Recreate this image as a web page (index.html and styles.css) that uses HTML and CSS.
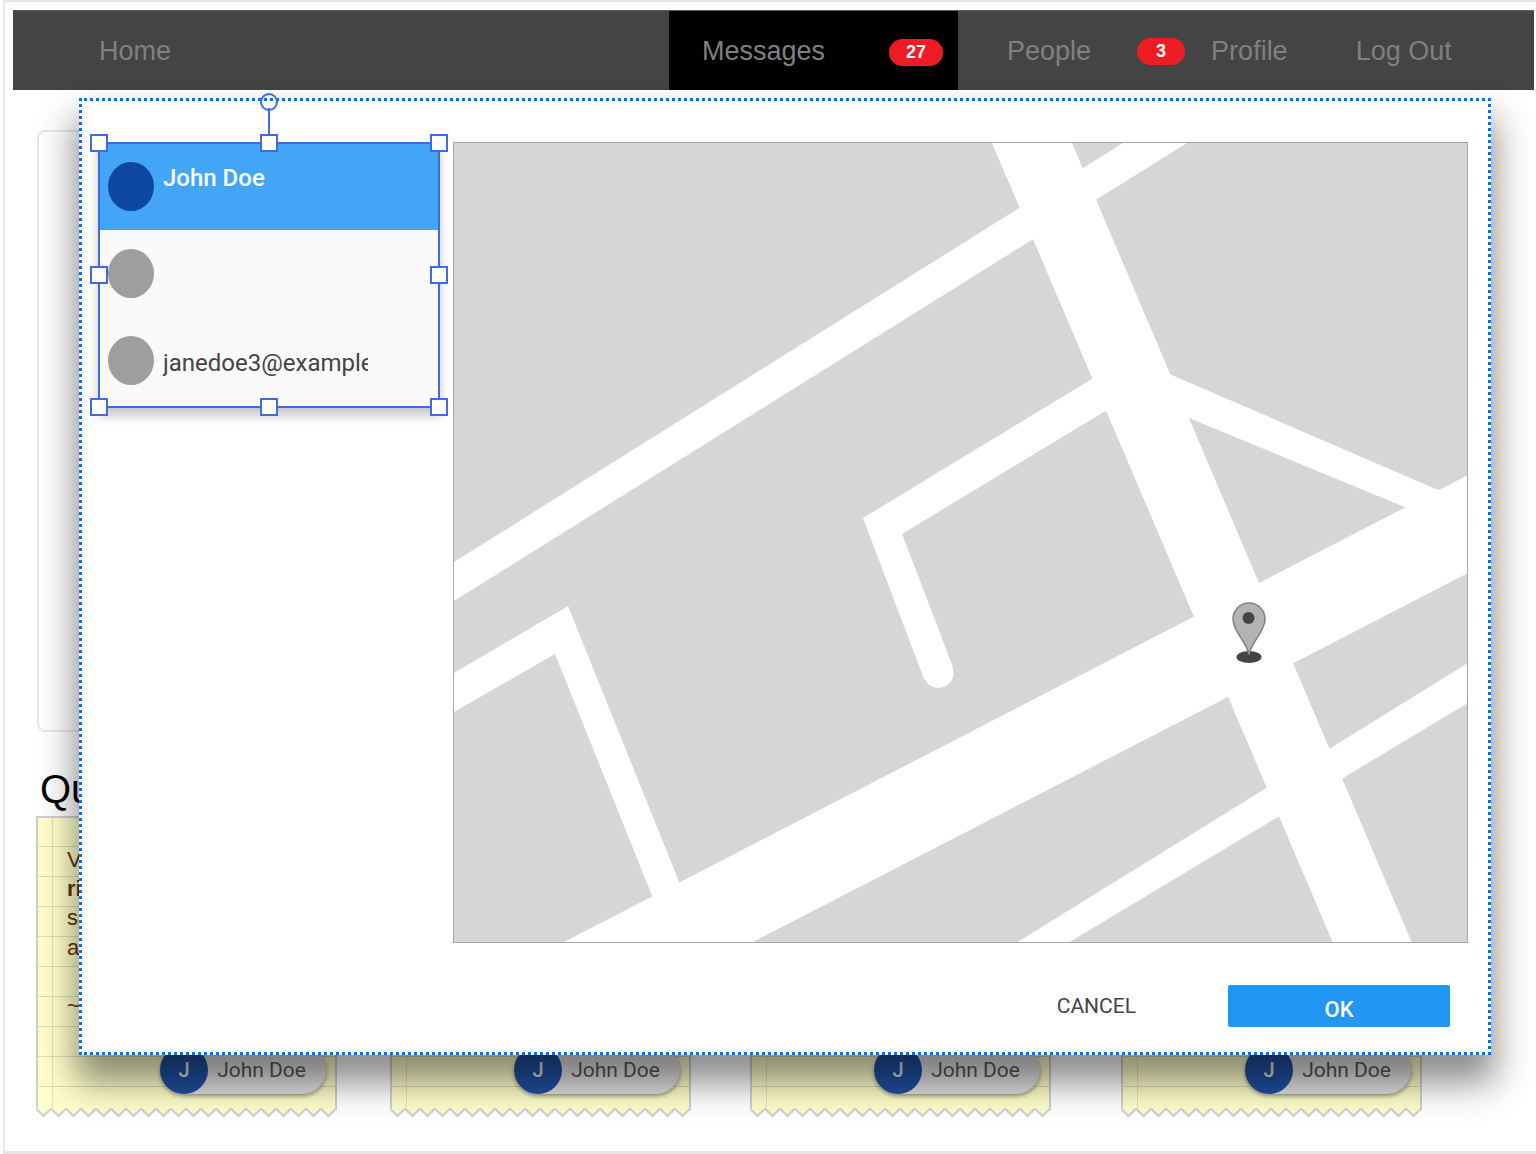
FILE: index.html
```html
<!DOCTYPE html>
<html lang="en">
<head>
    <meta charset="UTF-8">
    <meta name="viewport" content="width=device-width, initial-scale=1.0">
    <title>Messages</title>
    <link rel="stylesheet" href="styles.css">
</head>
<body>
    <svg class="defs" width="0" height="0">
        <defs>
            <pattern id="zigzag" width="15" height="10" patternUnits="userSpaceOnUse">
                <path d="M0 0V0.5L7.5 8L15 0.5V0Z" fill="#ffffcc"/>
                <path d="M0 0.5L7.5 8L15 0.5" fill="none" stroke="#cfcfcf" stroke-width="2"/>
            </pattern>
        </defs>
    </svg>

    <div class="page">
        <nav class="nav">
            <a class="nav-home">Home</a>
            <div class="nav-active">
                <a>Messages</a>
                <span class="badge badge-messages">27</span>
            </div>
            <a class="nav-people">People</a>
            <span class="badge badge-people">3</span>
            <a class="nav-profile">Profile</a>
            <a class="nav-logout">Log Out</a>
        </nav>

        <div class="card"></div>

        <h2 class="heading">Quotes</h2>

        <div class="notes">
            <div class="note-cell">
                <div class="note">
                    <p class="note-text">Very<br><strong>right</strong><br>so<br>and<br><br>~</p>
                    <div class="chip"><span class="chip-avatar">J</span><span>John Doe</span></div>
                    <svg class="note-edge"><rect width="100%" height="10" fill="url(#zigzag)"/></svg>
                </div>
            </div>
            <div class="note-cell">
                <div class="note">
                    <div class="chip"><span class="chip-avatar">J</span><span>John Doe</span></div>
                    <svg class="note-edge"><rect width="100%" height="10" fill="url(#zigzag)"/></svg>
                </div>
            </div>
            <div class="note-cell">
                <div class="note">
                    <div class="chip"><span class="chip-avatar">J</span><span>John Doe</span></div>
                    <svg class="note-edge"><rect width="100%" height="10" fill="url(#zigzag)"/></svg>
                </div>
            </div>
            <div class="note-cell">
                <div class="note">
                    <div class="chip"><span class="chip-avatar">J</span><span>John Doe</span></div>
                    <svg class="note-edge"><rect width="100%" height="10" fill="url(#zigzag)"/></svg>
                </div>
            </div>
        </div>
    </div>

    <div class="modal">
        <div class="modal-body">
            <div class="people">
                <div class="person person-selected">
                    <span class="avatar"></span>
                    <span class="person-name">John Doe</span>
                </div>
                <div class="person">
                    <span class="avatar"></span>
                </div>
                <div class="person">
                    <span class="avatar"></span>
                    <span class="person-name">janedoe3@example.com</span>
                </div>

                <span class="rotate-stem"></span>
                <span class="rotate-knob"></span>
                <span class="handle h-tl"></span>
                <span class="handle h-tc"></span>
                <span class="handle h-tr"></span>
                <span class="handle h-ml"></span>
                <span class="handle h-mr"></span>
                <span class="handle h-bl"></span>
                <span class="handle h-bc"></span>
                <span class="handle h-br"></span>
            </div>

            <svg class="map" viewBox="454 143 1013 799" width="1015" height="801">
                <rect x="454" y="143" width="1013" height="799" fill="#d6d6d6"/>
                <g fill="#ffffff">
                    <polygon points="992,143 1072,143 1412,943 1333,943"/>
                    <polygon points="454,562 1123,143 1187,143 454,601"/>
                    <polygon points="562,943 1468,475 1468,573 751,943"/>
                    <polygon points="454,673 568,606 680,884 653,898 555,654 454,712"/>
                    <polygon points="1110,368 863,518 924,679 953,667 902,534 1122,401"/>
                    <circle cx="938.5" cy="673" r="15"/>
                    <polygon points="1160,370 1438,490 1445,495 1407,508 1189,418"/>
                    <polygon points="1016,943 1468,663 1468,703 1068,943"/>
                </g>
                <ellipse cx="1249" cy="657" rx="12.5" ry="6" fill="#444444"/>
                <path d="M1249 655C1247 642 1233 632 1233 619A16 16 0 0 1 1265 619C1265 632 1251 642 1249 655Z" fill="#b3b3b3" stroke="#808080" stroke-width="1.5"/>
                <circle cx="1248.5" cy="618" r="6" fill="#444444"/>
            </svg>
        </div>

        <div class="modal-footer">
            <button type="button" class="btn-cancel">CANCEL</button>
            <button type="button" class="btn-ok">OK</button>
        </div>
    </div>
</body>
</html>
```

FILE: styles.css
```css
html, body {
    margin: 0;
    height: 1154px;
    overflow: hidden;
    background-color: #fff;
}
body {
    font-family: "Liberation Sans", Arial, sans-serif;
}
.defs {
    position: absolute;
}
.page {
    box-sizing: border-box;
    height: 1154px;
    margin-left: 3px;
    padding-top: 8px;
    border-left: 2px solid #e6e6e6;
    border-top: 2px solid #e6e6e6;
    border-bottom: 3px solid #e6e6e6;
}

/* top bar */
.nav {
    display: flex;
    align-items: center;
    box-sizing: border-box;
    height: 80px;
    margin: 0 2px 0 8px;
    padding-top: 2px;
    border-top: 1px solid #5e5e5e;
    background-color: #444444;
    font-size: 27px;
    color: #808080;
}
.nav-home {
    margin-left: 86px;
}
.nav-active {
    display: flex;
    align-items: center;
    align-self: flex-start;
    box-sizing: border-box;
    width: 289px;
    height: 79px;
    margin-top: -2px;
    margin-left: 498px;
    padding: 1px 0 0 33px;
    background-color: #000;
}
.nav-people {
    margin-left: 49px;
}
.nav-profile {
    margin-left: 26px;
}
.nav-logout {
    margin-left: 68px;
}
.badge {
    display: flex;
    align-items: center;
    justify-content: center;
    height: 27px;
    border-radius: 14px;
    background-color: #ee1c25;
    color: #fff;
    font-size: 18px;
    font-weight: bold;
}
.badge-messages {
    width: 54px;
    margin-left: 64px;
    margin-top: 3px;
}
.badge-people {
    width: 48px;
    margin-left: 46px;
    margin-top: -1px;
}

/* stuff behind the dialog */
.card {
    box-sizing: border-box;
    width: 1385px;
    height: 602px;
    margin: 40px 0 0 32px;
    border: 2px solid #e8e8e8;
    border-radius: 8px;
}
.heading {
    margin: 33px 0 3px 35px;
    font-size: 40px;
    font-weight: normal;
    line-height: 48px;
    color: #000;
}
.notes {
    display: grid;
    grid-template-columns: 354px 360px 371px 301px;
    margin: 0 0 0 31px;
}
.note {
    position: relative;
    display: flex;
    flex-direction: column;
    align-items: flex-end;
    justify-content: flex-end;
    box-sizing: border-box;
    width: 301px;
    height: 292px;
    padding: 0 9px 14px 0;
    border: solid #cfcfcf;
    border-width: 2px 2px 0;
    background-color: #ffffcc;
    background-image:
        linear-gradient(to right, transparent 14px, #f5d9bd 14px, #f5d9bd 15px, transparent 15px),
        repeating-linear-gradient(to bottom, transparent 0, transparent 28px, #dcdcbc 28px, #dcdcbc 29px, transparent 29px, transparent 30px);
}
.note-text {
    position: absolute;
    left: 29px;
    top: 27px;
    margin: 0;
    font-size: 22px;
    line-height: 29.2px;
    color: #663300;
}
.note-edge {
    position: absolute;
    left: -2px;
    bottom: -10px;
    width: 301px;
    height: 10px;
}
.chip {
    display: flex;
    align-items: center;
    height: 48px;
    padding-right: 20px;
    border-radius: 24px;
    background-color: #e0e0e0;
    box-shadow: 0 2px 4px rgba(0, 0, 0, 0.4);
    font-family: Roboto, sans-serif;
    font-size: 21px;
    color: #555;
}
.chip-avatar {
    display: flex;
    align-items: center;
    justify-content: center;
    width: 48px;
    height: 48px;
    margin-right: 9px;
    border-radius: 50%;
    background-color: #1f4f9e;
    color: #ddd;
    font-size: 20px;
    font-weight: 500;
}

/* dialog */
.modal {
    position: absolute;
    left: 79px;
    top: 98px;
    box-sizing: border-box;
    width: 1412px;
    height: 957px;
    padding: 41px 20px 0 16px;
    border: 3px dotted #0a6ee8;
    background-color: #fff;
    box-shadow: 0 24px 34px 4px rgba(0, 0, 0, 0.45);
}
.modal-body {
    display: flex;
    align-items: flex-start;
    gap: 13px;
}
.map {
    display: block;
    box-sizing: border-box;
    border: 1px solid #a8a8a8;
}

/* list with the selection frame */
.people {
    position: relative;
    box-sizing: border-box;
    flex: none;
    width: 342px;
    height: 266px;
    border: 2px solid #4169e1;
    background-color: #fafafa;
    box-shadow: 0 8px 10px rgba(0, 0, 0, 0.22);
    font-family: Roboto, sans-serif;
}
.person {
    display: flex;
    align-items: flex-start;
    box-sizing: border-box;
    height: 87px;
    padding: 19px 0 0 8px;
    font-size: 24px;
    line-height: 28px;
    color: #444;
}
.person-selected {
    height: 86px;
    padding-top: 18px;
    background-color: #42a5f5;
    color: #fff;
    font-weight: 500;
}
.avatar {
    flex: none;
    width: 46px;
    height: 49px;
    margin-right: 9px;
    border-radius: 50%;
    background-color: #9e9e9e;
}
.person-selected .avatar {
    background-color: #0d47a1;
}
.person-name {
    width: 205px;
    margin-top: 13px;
    overflow: hidden;
    white-space: nowrap;
}
.person-selected .person-name {
    margin-top: 2px;
}
.handle {
    position: absolute;
    box-sizing: border-box;
    width: 18px;
    height: 18px;
    border: 2px solid #4169e1;
    background-color: #fff;
}
.h-tl { left: -10px; top: -10px; }
.h-tc { left: 160px; top: -10px; }
.h-tr { right: -10px; top: -10px; }
.h-ml { left: -10px; top: 122px; }
.h-mr { right: -10px; top: 122px; }
.h-bl { left: -10px; bottom: -10px; }
.h-bc { left: 160px; bottom: -10px; }
.h-br { right: -10px; bottom: -10px; }
.rotate-stem {
    position: absolute;
    left: 168px;
    top: -36px;
    width: 2px;
    height: 27px;
    background-color: #4169e1;
}
.rotate-knob {
    position: absolute;
    left: 160px;
    top: -51px;
    box-sizing: border-box;
    width: 18px;
    height: 18px;
    border: 2px solid #4169e1;
    border-radius: 50%;
}

.modal-footer {
    display: flex;
    align-items: center;
    justify-content: flex-end;
    margin-top: 42px;
    padding-right: 18px;
}
.btn-cancel,
.btn-ok {
    padding: 0;
    border: none;
    font-family: Roboto, sans-serif;
}
.btn-cancel {
    margin-right: 92px;
    background: none;
    color: #444;
    font-size: 21px;
}
.btn-ok {
    width: 222px;
    height: 42px;
    padding-top: 7px;
    border-radius: 2px;
    background-color: #2196f3;
    color: #fff;
    font-size: 22px;
    font-weight: 500;
}
```
